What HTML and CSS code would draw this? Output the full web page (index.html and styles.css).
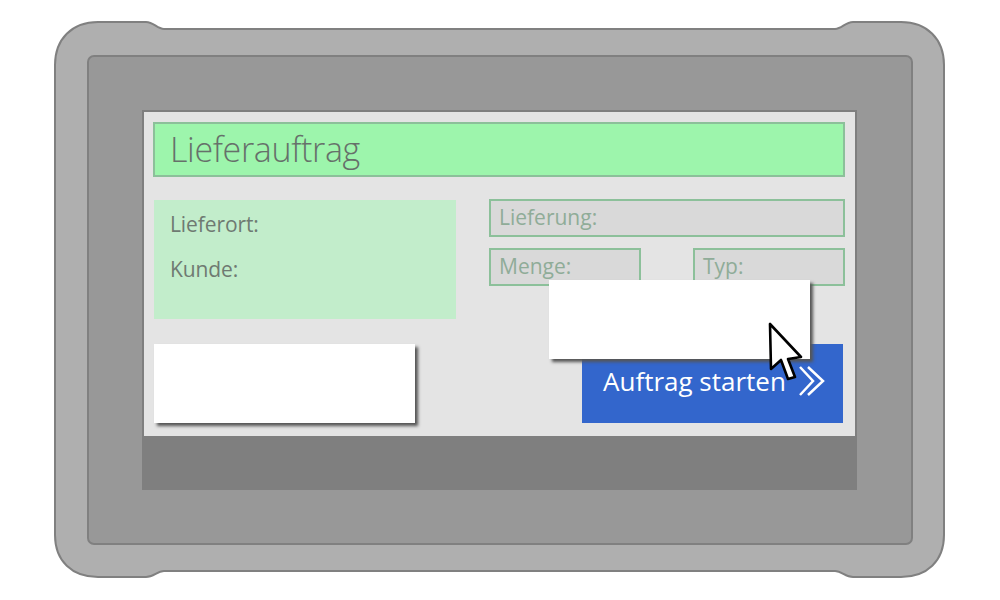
FILE: index.html
```html
<!DOCTYPE html>
<html lang="de">
<head>
    <meta charset="UTF-8">
    <meta name="viewport" content="width=device-width, initial-scale=1.0">
    <title>Lieferauftrag</title>
    <link rel="stylesheet" href="styles.css">
</head>
<body>
    <div class="device">
        <svg class="casing" width="891" height="557" viewBox="0 0 891 557">
            <path d="M1 44 C1 18 18 1 44 1 L92 1 C100 1 103 8 110 8 L781 8 C788 8 791 1 799 1 L847 1 C873 1 890 18 890 44 L890 514 C890 540 873 556 847 556 L799 556 C791 556 788 550 781 550 L110 550 C103 550 100 556 92 556 L44 556 C18 556 1 540 1 514 Z"/>
        </svg>
        <div class="bezel">
            <div class="screen">
                <div class="form">
                    <h1 class="title">Lieferauftrag</h1>
                    <div class="columns">
                        <div class="panel">
                            <p>Lieferort:</p>
                            <p>Kunde:</p>
                        </div>
                        <div class="fields">
                            <div class="field wide">Lieferung:</div>
                            <div class="field">Menge:</div>
                            <div class="field">Typ:</div>
                        </div>
                    </div>
                    <div class="actions">
                        <div class="blank"></div>
                        <button type="button" class="startBtn">
                            <span>Auftrag starten</span>
                            <svg width="26" height="30" viewBox="0 0 26 30">
                                <path d="M1 1 L14 15 L1 29 M9 1 L24 15 L9 29"/>
                            </svg>
                        </button>
                    </div>
                </div>
                <div class="statusbar"></div>
            </div>
        </div>
        <div class="blank popup"></div>
        <svg class="cursor" width="36" height="60" viewBox="0 0 36 60">
            <path d="M3 2 L4 47 L14 38 L21 57 L28 55 L21 37 L34 35 Z"/>
        </svg>
    </div>
</body>
</html>
```

FILE: styles.css
```css
*{
    margin: 0;
    padding: 0;
    box-sizing: border-box;
    font-family: "Open Sans", "Noto Sans", sans-serif;
}
body{
    width: 1000px;
    height: 600px;
    background: #fff;
    overflow: hidden;
}
.device{
    position: relative;
    width: 891px;
    height: 557px;
    margin: 21px 0 0 54px;
    padding: 34px 32px 0 33px;
}
.casing{
    position: absolute;
    top: 0;
    left: 0;
}
.casing path{
    fill: #afafaf;
    stroke: #808080;
    stroke-width: 2;
}
.bezel{
    position: relative;
    width: 826px;
    height: 490px;
    padding: 53px 0 0 53px;
    background: #989898;
    border: 2px solid #808080;
    border-radius: 7px;
}
.screen{
    width: 715px;
    height: 380px;
    border: 2px solid #7f7f7f;
    background: #7f7f7f;
}
.form{
    height: 324px;
    padding: 10px 10px 0 9px;
    background: #e4e4e4;
}
.title{
    height: 55px;
    padding-left: 15px;
    border: 2px solid #8cc09a;
    background: #9df5ac;
    color: #66706a;
    font-size: 34px;
    font-weight: 300;
    letter-spacing: -0.35px;
    line-height: 50px;
}
.columns{
    display: flex;
    justify-content: space-between;
    margin-top: 22px;
}
.panel{
    width: 302px;
    height: 119px;
    margin: 1px 0 0 1px;
    padding: 12px 16px;
    background: #c2edcb;
    color: #6f7a72;
    font-size: 21px;
    letter-spacing: -0.1px;
}
.panel p{
    height: 45px;
    line-height: 25px;
}
.fields{
    display: grid;
    grid-template-columns: 152px 152px;
    justify-content: space-between;
    align-content: start;
    row-gap: 11px;
    width: 356px;
}
.field{
    height: 38px;
    padding-left: 8px;
    border: 2px solid #8cc09a;
    background: #d9d9d9;
    color: #8fac98;
    font-size: 21px;
    line-height: 32px;
}
.wide{
    grid-column: 1 / 3;
}
.actions{
    display: flex;
    justify-content: space-between;
    margin-top: 25px;
    padding: 0 2px 0 1px;
}
.blank{
    width: 261px;
    height: 79px;
    background: #fff;
    box-shadow: 3px 3px 3px #555;
}
.startBtn{
    display: flex;
    align-items: center;
    gap: 13px;
    width: 261px;
    height: 79px;
    padding: 0 0 6px 21px;
    border: none;
    background: #3366cc;
    color: #fff;
    font-size: 26px;
}
.startBtn svg{
    flex: none;
    margin-top: 1px;
}
.startBtn path{
    fill: none;
    stroke: #fff;
    stroke-width: 2.5;
}
.popup{
    position: absolute;
    top: 259px;
    left: 495px;
}
.cursor{
    position: absolute;
    top: 301px;
    left: 713px;
}
.cursor path{
    fill: #fff;
    stroke: #000;
    stroke-width: 2.6;
    stroke-linejoin: round;
}
```
